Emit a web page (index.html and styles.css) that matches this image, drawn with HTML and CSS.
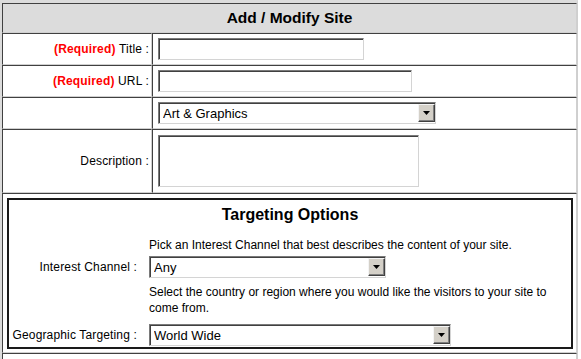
FILE: index.html
```html
<!DOCTYPE html>
<html lang="en">
<head>
<meta charset="utf-8">
<title>Add / Modify Site</title>
<link rel="stylesheet" href="styles.css">
</head>
<body>
<form class="sheet">
  <div class="cell head">Add / Modify Site</div>

  <div class="cell label"><span class="req">(Required)</span>&nbsp;Title :</div>
  <div class="cell field"><input class="text w-title" type="text"></div>

  <div class="cell label"><span class="req">(Required)</span>&nbsp;URL :</div>
  <div class="cell field"><input class="text w-url" type="text"></div>

  <div class="cell label"></div>
  <div class="cell field">
    <span class="dropdown w-cat">
      <select><option>Art &amp; Graphics</option></select>
      <span class="btn"><svg width="7" height="4" viewBox="0 0 7 4"><polygon points="0,0 7,0 3.5,4" fill="#000"/></svg></span>
    </span>
  </div>

  <div class="cell label">Description :</div>
  <div class="cell field desc"><textarea class="text area"></textarea></div>

  <div class="cell wide targeting-cell">
    <div class="targeting">
      <div class="t-title">Targeting Options</div>

      <div class="t-help t-help-1">Pick an Interest Channel that best describes the content of your site.</div>

      <div class="t-label">Interest Channel :</div>
      <div class="t-field">
        <span class="dropdown w-interest">
          <select><option>Any</option></select>
          <span class="btn"><svg width="7" height="4" viewBox="0 0 7 4"><polygon points="0,0 7,0 3.5,4" fill="#000"/></svg></span>
        </span>
      </div>

      <div class="t-help t-help-2">Select the country or region where you would like the visitors to your site to come from.</div>

      <div class="t-label">Geographic Targeting :</div>
      <div class="t-field">
        <span class="dropdown w-geo">
          <select><option>World Wide</option></select>
          <span class="btn"><svg width="7" height="4" viewBox="0 0 7 4"><polygon points="0,0 7,0 3.5,4" fill="#000"/></svg></span>
        </span>
      </div>
    </div>
  </div>

  <div class="cell wide next"></div>
</form>
</body>
</html>
```

FILE: styles.css
```css
html, body {
  margin: 0;
  padding: 0;
  background: #ffffff;
}

body {
  font-family: "Liberation Sans", Arial, sans-serif;
  font-size: 12px;
  color: #000;
}

.sheet {
  display: grid;
  grid-template-columns: 150px 425px;
  width: max-content;
  margin: 0;
  border-left: 2px solid #dcdcdc;
  border-top: 3px solid #dcdcdc;
  border-right: 1px solid #cfcfcf;
}

.cell {
  box-sizing: border-box;
  border-style: solid;
  border-width: 1px;
  border-color: #404040 #d0d0d0 #d0d0d0 #404040;
}

.wide {
  grid-column: 1 / -1;
}

.head {
  grid-column: 1 / -1;
  height: 30px;
  background: #dcdcdc;
  display: flex;
  align-items: center;
  justify-content: center;
  font-weight: bold;
  font-size: 15.5px;
}

.label {
  display: flex;
  align-items: center;
  justify-content: flex-end;
  padding-right: 2px;
  white-space: nowrap;
  letter-spacing: 0.15px;
}

.req {
  color: #ff0000;
  font-weight: bold;
}

.field {
  display: flex;
  align-items: center;
  padding: 4px 5px;
}

.field.desc {
  padding: 5px 5px;
}

.text {
  box-sizing: border-box;
  height: 22px;
  margin: 0;
  padding: 1px 3px;
  border: 1px solid;
  border-color: #7a7a7a #d4d4d4 #d4d4d4 #7a7a7a;
  box-shadow: inset 1px 1px 0 #404040;
  background: #fff;
  font-family: "Liberation Sans", Arial, sans-serif;
  font-size: 13px;
  border-radius: 0;
  outline: none;
}

.w-title { width: 206px; }
.w-url { width: 254px; }

.area {
  width: 261px;
  height: 52px;
  resize: none;
  display: block;
}

.dropdown {
  position: relative;
  display: inline-block;
  height: 22px;
}

.dropdown select {
  appearance: none;
  -webkit-appearance: none;
  box-sizing: border-box;
  width: 100%;
  height: 22px;
  margin: 0;
  padding: 0 0 0 4px;
  border: 1px solid;
  border-color: #7a7a7a #d4d4d4 #d4d4d4 #7a7a7a;
  box-shadow: inset 1px 1px 0 #404040;
  border-radius: 0;
  background: #fff;
  color: #000;
  font-family: "Liberation Sans", Arial, sans-serif;
  font-size: 13px;
  outline: none;
}

.dropdown .btn {
  position: absolute;
  top: 2px;
  right: 1px;
  box-sizing: border-box;
  width: 17px;
  height: 18px;
  display: flex;
  align-items: center;
  justify-content: center;
  background: #d4d0c8;
  border: 1px solid;
  border-color: #f4f4f4 #404040 #404040 #f4f4f4;
  box-shadow: inset -1px -1px 0 #808080;
}

.w-cat { width: 278px; }
.w-interest { width: 237px; }
.w-geo { width: 302px; }

.targeting-cell {
  padding: 4px 3px 3px 4px;
}

.targeting {
  box-sizing: border-box;
  border: 2px solid #1a1a1a;
  display: grid;
  grid-template-columns: 140px 1fr;
  padding: 5px 0 1px 0;
  line-height: 14px;
}

.t-title {
  grid-column: 1 / -1;
  text-align: center;
  font-weight: bold;
  font-size: 16px;
  line-height: 19px;
}

.t-help {
  grid-column: 2;
  padding-right: 4px;
}

.t-help-1 {
  margin-top: 14px;
}

.t-help-2 {
  margin-top: 6px;
  line-height: 16px;
}

.t-label {
  grid-column: 1;
  display: flex;
  align-items: center;
  justify-content: flex-end;
  padding-right: 12px;
  white-space: nowrap;
  letter-spacing: 0.15px;
}

.t-field {
  grid-column: 2;
  display: flex;
  align-items: center;
}

.t-help-1 + .t-label,
.t-help-1 + .t-label + .t-field {
  margin-top: 4px;
}

.t-help-2 + .t-label,
.t-help-2 + .t-label + .t-field {
  margin-top: 8px;
}

.next {
  height: 10px;
  border-bottom: none;
}
```
